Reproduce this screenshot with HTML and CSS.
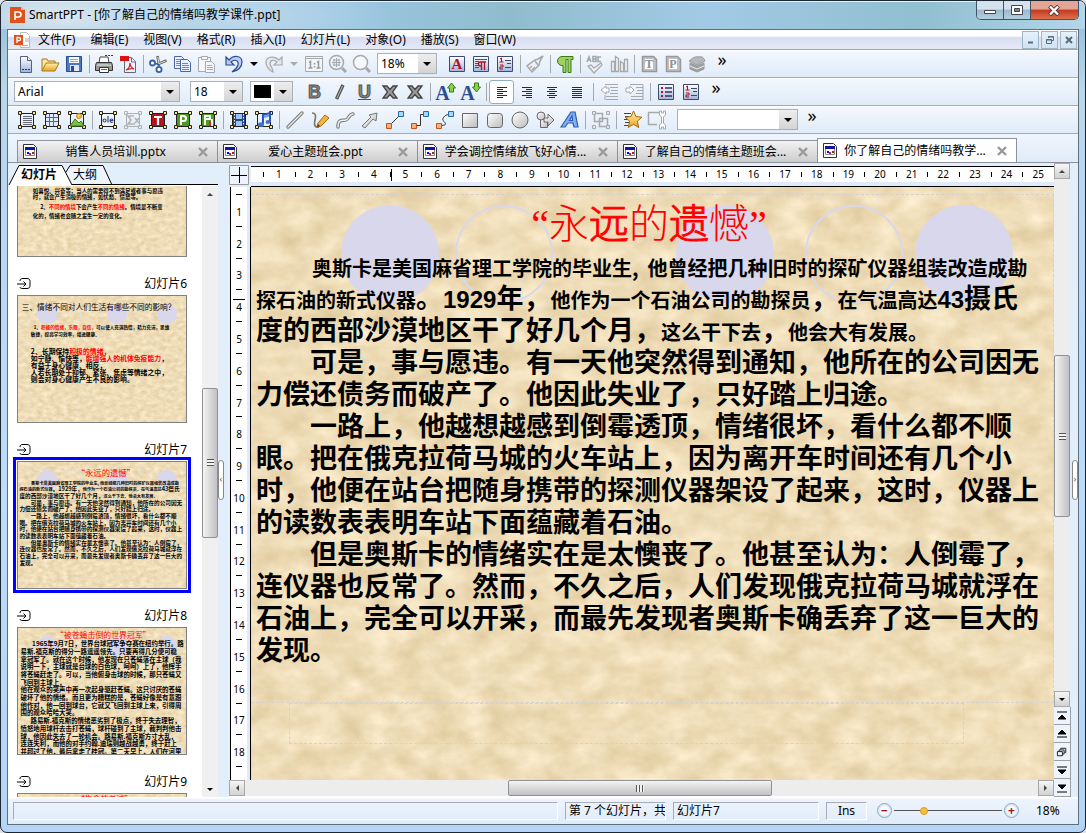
FILE: index.html
```html
<!DOCTYPE html>
<html lang="zh-CN">
<head>
<meta charset="utf-8">
<title>SmartPPT</title>
<link rel="stylesheet" href="styles.css">
</head>
<body>
<svg class="defs" width="0" height="0" aria-hidden="true">
  <defs>
    <filter id="grain" x="0" y="0" width="100%" height="100%" color-interpolation-filters="sRGB">
      <feTurbulence type="fractalNoise" baseFrequency="0.034 0.05" numOctaves="6" seed="8"/>
      <feColorMatrix values="0.13 0.05 0 0 0.845  0.17 0.05 0 0 0.755  0.24 0.06 0 0 0.57  0 0 0 0 1"/>
    </filter>
    <linearGradient id="gBlue" x2="0" y2="1"><stop offset="0" stop-color="#fff"/><stop offset="1" stop-color="#9fb4dc"/></linearGradient>
    <linearGradient id="gGray" x2="1" y2="1"><stop offset="0" stop-color="#fff"/><stop offset="1" stop-color="#bbb"/></linearGradient>
    <linearGradient id="gGold" x2="0" y2="1"><stop offset="0" stop-color="#fff3a8"/><stop offset="1" stop-color="#e9a227"/></linearGradient>
    <g id="paper">
      <rect width="803" height="620" fill="#ecdcb8"/>
      <rect width="803" height="620" filter="url(#grain)"/>
      <g fill="#d9d7ec"><circle cx="139" cy="87" r="49"/><circle cx="474" cy="87" r="49"/><circle cx="713" cy="87" r="49"/></g>
      <g fill="none" stroke="#d9d7ec" stroke-width="2"><circle cx="253" cy="87" r="48"/><circle cx="603" cy="87" r="48"/></g>
    </g>
  </defs>
  <symbol id="frame" viewBox="0 0 20 20">
    <path d="M3.500 3v14M16.500 3v14M3 3.500h14M3 16.500h14" stroke="#222" fill="none"/>
    <g fill="#ffe68a" stroke="#222"><path d="M1.500 1.500h3v3h-3zM15.500 1.500h3v3h-3zM1.500 15.500h3v3h-3zM15.500 15.500h3v3h-3z"/></g>
  </symbol>
  <symbol id="new" viewBox="0 0 20 20"><path d="M4.500 2.500h7l4 4v12h-11z" fill="url(#gBlue)" stroke="#50607e"/><path d="M11.500 2.500v4h4" fill="#fff" stroke="#50607e"/><path d="M6 15.500h2m1 0h2m1 0h2" stroke="#335"/></symbol>
  <symbol id="open" viewBox="0 0 20 20"><path d="M2 17V5h5l1 2h7v3" fill="#ffe79a" stroke="#a37a1c"/><path d="M2 17l4-8h13l-4 8z" fill="url(#gGold)" stroke="#a37a1c"/></symbol>
  <symbol id="save" viewBox="0 0 20 20"><path d="M2.500 2.500h15v15h-15z" fill="#4d78c8" stroke="#284b8f"/><path d="M5 3h10v6H5z" fill="#fff"/><path d="M6 11h9v6H6z" fill="#dce6f6"/><path d="M7 12h3v5H7z" fill="#284b8f"/><path d="M6 5.500h8M6 7.500h8" stroke="#9ab"/></symbol>
  <symbol id="print" viewBox="0 0 20 20"><path d="M11 1.500h8" stroke="#336" stroke-dasharray="2 1"/><path d="M5 9l1-6h8l1 6" fill="#fff" stroke="#444"/><path d="M2.500 8.500h15l1 3v5h-17v-5z" fill="#999" stroke="#333"/><path d="M3 11h14" stroke="#eee"/><path d="M5.500 13.500h9v5h-9z" fill="#fff" stroke="#333"/><path d="M7 15.500h6" stroke="#36a"/><path d="M14 10h2" stroke="#5c2"/></symbol>
  <symbol id="pdf" viewBox="0 0 20 20"><path d="M6.500 3.500h7l4 4v11h-11z" fill="#eef" stroke="#667"/><path d="M2 2h9v5H2z" fill="#d11"/><path d="M13.500 4v4h4" fill="#fff" stroke="#667"/><path d="M8 16c3-1 4-5 4-7 0 3 2 5 4 6-3-1-5 0-8 1z" fill="none" stroke="#c22" stroke-width="1.300"/></symbol>
  <symbol id="cut" viewBox="0 0 20 20"><path d="M9.500 2l1.500 9M18.500 6.500L9 10.500" stroke="#666" stroke-width="2.600"/><path d="M9.800 3l1.200 7M17.500 7L10 10" fill="none" stroke="#ddd"/><circle cx="4.500" cy="9" r="2.500" fill="#fff" stroke="#3a5fa8" stroke-width="1.800"/><circle cx="11" cy="15.500" r="2.600" fill="#fff" stroke="#3a5fa8" stroke-width="1.800"/><path d="M7 9.500l4 1v2" fill="none" stroke="#3a5fa8" stroke-width="1.600"/></symbol>
  <symbol id="copy" viewBox="0 0 20 20"><g fill="#eaf0fc" stroke="#4a66a4"><path d="M2.500 2.500h7l2 2v10h-9z"/><path d="M8.500 5.500h7l3 3v9h-10z"/></g><path d="M4 5.500h5M4 7.500h4M4 9.500h4M4 11.500h4M10 9.500h6M10 11.500h7M10 13.500h7M10 15.500h7" stroke="#6b86c2"/></symbol>
  <symbol id="paste" viewBox="0 0 20 20"><g fill="#f4f6fa" stroke="#a5a8ad"><path d="M2.500 3.500h12v14h-12z"/><path d="M5.500 2.500h6v3h-6z"/><path d="M9.500 7.500h6l3 3v8h-9z"/></g><path d="M11 11.500h5M11 13.500h6M11 15.500h6" stroke="#a5a8ad"/></symbol>
  <symbol id="undo" viewBox="0 0 20 20"><path d="M2 3v8h8L7 8c3-3 8-2 7 3-1 3-3 5-6 7 6-1 10-5 10-10 0-6-8-8-13-2z" fill="#b8cdf2" stroke="#2c4c94" stroke-width="1.200"/></symbol>
  <symbol id="redo" viewBox="0 0 20 20"><path d="M18 3v8h-8l3-3c-3-3-7-2-7 2 1 3 3 5 3 8-4-2-7-6-7-10 0-5 8-7 13-2z" fill="#e6e8ec" stroke="#a5a8ad" stroke-width="1.200"/></symbol>
  <symbol id="one" viewBox="0 0 20 20"><path d="M1.500 2.500h17v15h-17zM1.500 4.500h17" fill="#f2f4f8" stroke="#a5a8ad"/><path d="M5 8.500l1.500-1V14M4.500 14h4M13 8.500l1.500-1V14M12.500 14h4M10.500 9v1.500m0 1.500v1.500" fill="none" stroke="#999" stroke-width="1.500"/></symbol>
  <symbol id="zoomw" viewBox="0 0 20 20"><circle cx="8.500" cy="8.500" r="7" fill="none" stroke="#a5a8ad" stroke-width="1.500"/><path d="M8.500 4v9M4 8.500h9M6 5v7M11 5v7M5 6h7M5 11h7" stroke="#a5a8ad"/><path d="M14 14l4 4" stroke="#a5a8ad" stroke-width="3"/></symbol>
  <symbol id="zoomp" viewBox="0 0 20 20"><circle cx="8.500" cy="8.500" r="7" fill="#f5f7fa" stroke="#a5a8ad" stroke-width="1.500"/><path d="M14 14l4 4" stroke="#a5a8ad" stroke-width="3"/></symbol>
  <symbol id="panel" viewBox="0 0 20 20"><path d="M2.500 2.500h15v15h-15z" fill="url(#gBlue)" stroke="#3c4a6c"/></symbol>
  <symbol id="pilcrow" viewBox="0 0 20 20"><use href="#panel"/><path d="M4 5.500h12M4 7.500h4M4 9.500h3M4 11.500h3M4 13.500h4" stroke="#456"/><path d="M10.500 16V8.500M13.500 16V8.500M15 8H9.500a2 2 0 000 4h1" fill="none" stroke="#b01020" stroke-width="1.300"/></symbol>
  <symbol id="num" viewBox="0 0 20 20"><use href="#panel"/><path d="M5 5l1.500-1v4M4.500 8h4M5 11h3v2H5v2h3" fill="none" stroke="#b01020"/><path d="M10 6.500h6M10 13.500h6M12 9.500h4" stroke="#446"/></symbol>
  <symbol id="bul" viewBox="0 0 20 20"><use href="#panel"/><path d="M5 5h2v2H5zM5 9h2v2H5zM5 13h2v2H5z" fill="#b01020"/><path d="M9 6h7M9 10h7M9 14h7" stroke="#335" stroke-width="1.300"/></symbol>
  <symbol id="brush" viewBox="0 0 20 20"><path d="M18 2l-5 3-3 1-8 6 5 6 7-7 1-4z" fill="#f1f2f5" stroke="#a5a8ad" stroke-width="1.500"/><path d="M10 7l3 4M5 14l2-2M7 16l3-3" stroke="#a5a8ad" stroke-width="1.500"/></symbol>
  <symbol id="para" viewBox="0 0 20 20"><path d="M18 2.500H7a4.500 4.500 0 000 9h1v7h3v-13h2v13h3v-13h2z" fill="#9ad45c" stroke="#3c7a14"/></symbol>
  <symbol id="spell" viewBox="0 0 20 20"><path d="M2 8l2-5 2 5M3 6h3M8 8V2.500h3v5H8m0-2.500h3M16 3h-3v4.500h3" fill="none" stroke="#a5a8ad" stroke-width="1.600"/><path d="M3 12l3-1 3 3 7-5 1 2-8 8z" fill="#eee" stroke="#a5a8ad" stroke-width="1.200"/></symbol>
  <symbol id="books" viewBox="0 0 20 20"><path d="M2.500 17.500v-10h3v10zM6.500 17.500v-15l3 2v13zM11.500 17.500v-10l3 2v8zM15.500 17.500v-12h3v12z" fill="#f1f2f5" stroke="#a5a8ad" stroke-width="1.300"/></symbol>
  <symbol id="dict" viewBox="0 0 20 20"><path d="M3.500 2.500h11l3 3v12h-14z" fill="#bfc1c5" stroke="#999" stroke-width="1.500"/><path d="M6 5h8v10H6z" fill="#fff"/></symbol>
  <symbol id="hat" viewBox="0 0 20 20"><path d="M2 7c3-3 7-5 10-4 3-1 5 1 6 4l-8 4z" fill="#b6b8bc" stroke="#999"/><path d="M3 9l7 3 7-3v6l-7 3-7-3z" fill="#9c9ea2" stroke="#999"/><path d="M3 12l7 3 7-3" fill="none" stroke="#eee"/></symbol>
  <symbol id="biu" viewBox="0 0 20 20"><path d="M6.500 17L13 3" stroke="#555" stroke-width="3.500"/><path d="M7 16L12.500 4" stroke="#bbb"/></symbol>
  <symbol id="cross" viewBox="0 0 20 20"><path d="M3 4h4l3 3.500L13 4h4l-4.500 6 4.500 6h-4l-3-3.500L7 16H3l4.500-6z" fill="#999" stroke="#444" stroke-width="1.300"/></symbol>
  <symbol id="up" viewBox="0 0 20 20"><path d="M15.500 1l4 5h-2v4h-4V6h-2z" fill="#8cd04a" stroke="#3a7a12"/></symbol>
  <symbol id="down" viewBox="0 0 20 20"><path d="M15.500 10l4-5h-2V1h-4v4h-2z" fill="#8cd04a" stroke="#3a7a12"/></symbol>
  <symbol id="al" viewBox="0 0 20 20"><path d="M5 5.500h10M5 7.500h6M5 9.500h10M5 11.500h6M5 13.500h10M5 15.500h6" stroke="#222b4a"/></symbol>
  <symbol id="ar" viewBox="0 0 20 20"><path d="M5 5.500h10M9 7.500h6M5 9.500h10M9 11.500h6M5 13.500h10M9 15.500h6" stroke="#222b4a"/></symbol>
  <symbol id="ac" viewBox="0 0 20 20"><path d="M5 5.500h10M7 7.500h6M5 9.500h10M7 11.500h6M5 13.500h10M7 15.500h6" stroke="#222b4a"/></symbol>
  <symbol id="aj" viewBox="0 0 20 20"><path d="M5 5.500h10M5 7.500h10M5 9.500h10M5 11.500h10M5 13.500h10M5 15.500h10" stroke="#222b4a"/></symbol>
  <symbol id="outd" viewBox="0 0 20 20"><path d="M5 2.500h13M10 5.500h8M11 8.500h7M10 11.500h8M6 14.500h12M6 17.500h12M5 13v5" stroke="#a5a8ad"/><path d="M1 8l5-4v2h3v4H6v2z" fill="#fff" stroke="#a5a8ad"/></symbol>
  <symbol id="ind" viewBox="0 0 20 20"><path d="M5 2.500h13M11 5.500h7M12 8.500h6M11 11.500h7M6 14.500h12M6 17.500h12M18 3v15" stroke="#a5a8ad"/><path d="M9 8L5 4v2H1v4h4v2z" fill="#fff" stroke="#a5a8ad"/></symbol>
  <symbol id="f-text" viewBox="0 0 20 20"><use href="#frame"/><path d="M6 6.500h9M6 8.500h9M6 10.500h9M6 12.500h9M6 14.500h9" stroke="#667"/></symbol>
  <symbol id="f-table" viewBox="0 0 20 20"><path d="M4 4h12v12H4z" fill="#dfeafc"/><path d="M7.500 4v12M11.500 4v12M4 7.500h12M4 11.500h12" stroke="#4868a8"/><use href="#frame"/></symbol>
  <symbol id="f-pic" viewBox="0 0 20 20"><use href="#frame"/><path d="M3 16l5-7 4 4 2-2 3 5z" fill="#7cc043" stroke="#3c7a1c"/><circle cx="12" cy="6" r="2.500" fill="#f7c948" stroke="#c98512"/></symbol>
  <symbol id="f-ole" viewBox="0 0 20 20"><path d="M4 4h12v12H4z" fill="#f2f5fb"/><use href="#frame"/><g fill="none" stroke="#334a84" stroke-width="1.200"><circle cx="6.500" cy="10.500" r="1.500"/><path d="M10 6v6.500M12 10.500h3c0-2-3-2-3 0s2 2 3 1.500"/></g></symbol>
  <symbol id="f-sum" viewBox="0 0 20 20"><g fill="none" stroke="#b0b2b6"><path d="M3.500 3.500h13v13h-13z"/><path d="M1.500 1.500h3v3h-3zM15.500 1.500h3v3h-3zM1.500 15.500h3v3h-3zM15.500 15.500h3v3h-3z"/><path d="M11 6H5l3 4-3 4h7M12 8l4 5M16 8l-4 5" stroke-width="1.600"/></g></symbol>
  <symbol id="f-t" viewBox="0 0 20 20"><path d="M4 4h12v12H4z" fill="#b3141c"/><path d="M6 7h8M10 7v8" stroke="#fff" stroke-width="2.200"/><use href="#frame"/></symbol>
  <symbol id="f-p" viewBox="0 0 20 20"><path d="M4 4h12v12H4z" fill="#4e9a1c"/><path d="M8 15V6h2.500a2.300 2.300 0 010 5H8" fill="none" stroke="#fff" stroke-width="2"/><use href="#frame"/></symbol>
  <symbol id="f-f" viewBox="0 0 20 20"><path d="M4 4h12v12H4z" fill="#4e9a1c"/><path d="M7 15V6h5v3H8" fill="none" stroke="#fff" stroke-width="1.800"/><path d="M11 11h2v5h-2z" fill="#d22"/><path d="M13 9h2v7h-2z" fill="#fff"/><use href="#frame"/></symbol>
  <symbol id="f-film" viewBox="0 0 20 20"><path d="M4 3h12v14H4z" fill="#27427e"/><path d="M7 4h6v5H7zM7 11h6v5H7z" fill="#9cc4f4"/><path d="M5.500 4v12M14.500 4v12" stroke="#fff" stroke-dasharray="1.500 1.500"/><use href="#frame"/></symbol>
  <symbol id="f-note" viewBox="0 0 20 20"><path d="M4 4h12v12H4z" fill="#e9f0fc"/><use href="#frame"/><path d="M9 14V5l7-2v9" fill="none" stroke="#2d56a8" stroke-width="2"/><path d="M10 7l5-1.500" stroke="#6f9be0" stroke-width="2"/><ellipse cx="7" cy="14.500" rx="3" ry="2.300" fill="#3f74d0"/><ellipse cx="14" cy="12" rx="2.500" ry="2" fill="#3f74d0"/></symbol>
  <symbol id="line" viewBox="0 0 20 20"><path d="M3 17L17 3" stroke="#777" stroke-width="3.400" stroke-linecap="round"/><path d="M3 17L17 3" stroke="#eee" stroke-width="1.400" stroke-linecap="round"/></symbol>
  <symbol id="pencil" viewBox="0 0 20 20"><path d="M2 3c4 0 4 3 3 7s-1 8 4 7" fill="none" stroke="#776" stroke-width="1.600"/><path d="M15 5l4 3-8 8-4 1 1-4z" fill="#f2b63c" stroke="#a6691a"/><path d="M7 17l1-3 2 2z" fill="#533"/></symbol>
  <symbol id="curve" viewBox="0 0 20 20"><g fill="none" stroke-linecap="round"><path d="M3 17c0-9 5-6 8-7s3-6 7-6" stroke="#777" stroke-width="3.400"/><path d="M3 17c0-9 5-6 8-7s3-6 7-6" stroke="#eee" stroke-width="1.400"/></g></symbol>
  <symbol id="arrow" viewBox="0 0 20 20"><path d="M2 16l9-9-2-2 8-2-1 8-3-2-8 9z" fill="url(#gGray)" stroke="#777"/></symbol>
  <symbol id="ends" viewBox="0 0 20 20"><path d="M1.500 13.500h5v5h-5z" fill="#f7b27a" stroke="#c4541a"/><path d="M13.500 1.500h5v5h-5z" fill="#a8d8f8" stroke="#246ca8"/></symbol>
  <symbol id="c1" viewBox="0 0 20 20"><path d="M6 14l8-8" stroke="#333"/><use href="#ends"/></symbol>
  <symbol id="c2" viewBox="0 0 20 20"><path d="M6 15.500h4.500v-11H14" fill="none" stroke="#333"/><use href="#ends"/></symbol>
  <symbol id="c3" viewBox="0 0 20 20"><path d="M6 15.500c8 0 3-4 2-5s1-6 6-6" fill="none" stroke="#333"/><use href="#ends"/></symbol>
  <symbol id="rect" viewBox="0 0 20 20"><path d="M2.500 3.500h15v14h-15z" fill="url(#gGray)" stroke="#666"/></symbol>
  <symbol id="rrect" viewBox="0 0 20 20"><rect x="2.500" y="3.500" width="15" height="14" rx="3" fill="url(#gGray)" stroke="#666"/></symbol>
  <symbol id="oval" viewBox="0 0 20 20"><circle cx="10" cy="10" r="8" fill="url(#gGray)" stroke="#666"/></symbol>
  <symbol id="shapes" viewBox="0 0 20 20"><g fill="url(#gGray)" stroke="#666"><path d="M5.500 8.500h7v9h-7z"/><circle cx="6" cy="6" r="4"/><path d="M9 8h4V4l6 6-6 6v-4H9z"/></g></symbol>
  <symbol id="art" viewBox="0 0 20 20"><path d="M1 17L11 2h4l3 15h-4l-1-4H8l-3 4zM9.500 10.500h3L12 6z" fill="#7fb0f0" fill-rule="evenodd" stroke="#2c5cb0" stroke-width="1.200"/></symbol>
  <symbol id="group" viewBox="0 0 20 20"><g fill="#e4e6ea" stroke="#a5a8ad"><path d="M3.500 3.500h8v8h-8zM8.500 8.500h8v8h-8z" fill="none" stroke-width="1.500"/><path d="M1.500 1.500h3v3h-3zM15.500 1.500h3v3h-3zM1.500 15.500h3v3h-3zM15.500 15.500h3v3h-3z"/></g></symbol>
  <symbol id="star" viewBox="0 0 20 20"><path d="M2 3.500h7M3 6.500h4M2 9.500h5M3 12.500h4M2 15.500h4" stroke="#444"/><path d="M11.500 1l2.400 5.500 6 .7-4.500 4 1.300 6.300-5.200-3.200-5.200 3.200 1.300-6.300-4.500-4 6-.7z" fill="url(#gGold)" stroke="#a06c0c"/></symbol>
  <symbol id="wrench" viewBox="0 0 20 20"><path d="M10 14.500H1.500v-12h12" fill="none" stroke="#a5a8ad" stroke-width="1.500"/><path d="M12.500 1v4l2 2v6l-2 2v4h2v-2h2v2h2v-4l-2-2V7l2-2V1h-2v2h-2V1z" fill="#fff" stroke="#a5a8ad"/></symbol>
  <symbol id="doc" viewBox="0 0 14 15"><path d="M.5.500h10l3 3v11H.5z" fill="#fff" stroke="#333"/><path d="M2.500 3.500h9v8h-9z" fill="#fff" stroke="#888"/><path d="M2 3h10v3H2z" fill="#1414a0"/><path d="M4 8h2v2H4z" fill="#00f"/><path d="M6 9h2v2H6z" fill="#c22"/><path d="M9 8h2v2H9z" fill="#a22"/></symbol>
  <symbol id="close" viewBox="0 0 10 10"><path d="M1 1l8 8M9 1L1 9" stroke="#999" stroke-width="2.400"/></symbol>
  <symbol id="trans" viewBox="0 0 14 12"><path d="M3 3c0-2 1-2.500 3-2.500h4c2 0 3 1 3 3v4c0 2-1 3-3 3H6C4 10.500 3 10 3 9M0 6h9M6.500 3.500L9 6 6.500 8.500" fill="none" stroke="#000"/></symbol>
</svg>

<div class="window">
  <header class="titlebar">
    <svg class="logo" viewBox="0 0 15 16"><path d="M0 0h11l4 3v13H0z" fill="#e0521c"/><path d="M11 0v3h4z" fill="#f8c0a0"/><path d="M5 13V5h3.500a2.300 2.300 0 010 5H5" fill="none" stroke="#fff" stroke-width="1.600"/></svg>
    <h1>SmartPPT - [你了解自己的情绪吗教学课件.ppt]</h1>
    <div class="winbtns">
      <button aria-label="最小化"><svg viewBox="0 0 13 11"><path d="M.5 5.500h11v3H.5z" fill="#fff" stroke="#445"/></svg></button>
      <button aria-label="最大化"><svg viewBox="0 0 13 11"><path d="M.5.500h11v9H.5z" fill="#fff" stroke="#445"/><path d="M3.500 3.500h5v3h-5z" fill="#789" stroke="#445"/></svg></button>
      <button class="x" aria-label="关闭"><svg viewBox="0 0 13 11"><path d="M1.500 1l9 9M10.500 1l-9 9" stroke="#533" stroke-width="4"/><path d="M2 1.500l8 8M10 1.500l-8 8" stroke="#fff" stroke-width="2.400"/></svg></button>
    </div>
  </header>

  <div class="client">
    <nav class="menubar">
      <svg class="applogo" viewBox="0 0 16 16"><path d="M6.500.500h6l3 3v12h-9z" fill="#fff" stroke="#bbb"/><path d="M11 7h4M11 9h4M8 13.500h6" stroke="#aab"/><path d="M0 3h9v10H0z" fill="#e0521c"/><path d="M3 11V5.500h2a1.500 1.500 0 010 3.200H3" fill="none" stroke="#fff" stroke-width="1.300"/></svg>
      <button>文件(F)</button><button>编辑(E)</button><button>视图(V)</button><button>格式(R)</button><button>插入(I)</button><button>幻灯片(L)</button><button>对象(O)</button><button>播放(S)</button><button>窗口(W)</button>
      <div class="mdi">
        <button aria-label="最小化文档"><svg viewBox="0 0 10 10"><path d="M2 7.500h5" stroke="#5a6a7a" stroke-width="2"/></svg></button>
        <button aria-label="还原文档"><svg viewBox="0 0 10 10"><path d="M3.500 3V1.500h5v4H7M3 2h6M1.500 4.500h5v4h-5zM1 5h6" fill="none" stroke="#5a6a7a"/></svg></button>
        <button aria-label="关闭文档"><svg viewBox="0 0 10 10"><path d="M2 2l6 6M8 2L2 8" stroke="#5a6a7a" stroke-width="2"/></svg></button>
      </div>
    </nav>

    <div class="toolbar t1">
      <button aria-label="新建"><svg><use href="#new"/></svg></button><button aria-label="打开"><svg><use href="#open"/></svg></button><button aria-label="保存"><svg><use href="#save"/></svg></button><i class="sep"></i>
      <button aria-label="打印"><svg><use href="#print"/></svg></button><button aria-label="导出PDF"><svg><use href="#pdf"/></svg></button><i class="sep"></i>
      <button aria-label="剪切"><svg><use href="#cut"/></svg></button><button aria-label="复制"><svg><use href="#copy"/></svg></button><button aria-label="粘贴"><svg><use href="#paste"/></svg></button>
      <button class="lead" aria-label="撤销"><svg><use href="#undo"/></svg></button><button class="drop" aria-label="撤销列表"><i class="tri"></i></button>
      <button aria-label="重做"><svg><use href="#redo"/></svg></button><button class="drop off" aria-label="重做列表"><i class="tri"></i></button>
      <button aria-label="实际大小"><svg><use href="#one"/></svg></button><button aria-label="适合窗口"><svg><use href="#zoomw"/></svg></button><button aria-label="缩放"><svg><use href="#zoomp"/></svg></button>
      <span class="combo zoom"><select aria-label="显示比例"><option>18%</option></select><i class="tri"></i></span>
      <button class="glyph" aria-label="字符"><svg><use href="#panel"/></svg><b class="red">A</b></button><button aria-label="段落"><svg><use href="#pilcrow"/></svg></button><button aria-label="编号列表"><svg><use href="#num"/></svg></button><i class="sep"></i>
      <button aria-label="格式刷"><svg><use href="#brush"/></svg></button><i class="sep"></i>
      <button aria-label="格式标记"><svg><use href="#para"/></svg></button><i class="sep"></i>
      <button aria-label="拼写"><svg><use href="#spell"/></svg></button><button aria-label="词库"><svg><use href="#books"/></svg></button><i class="sep"></i>
      <button class="glyph" aria-label="文字处理"><svg><use href="#dict"/></svg><b class="gray">T</b></button><button class="glyph" aria-label="表格计算"><svg><use href="#dict"/></svg><b class="gray">P</b></button><button aria-label="学习"><svg><use href="#hat"/></svg></button>
      <button class="more" aria-label="更多常用工具">»</button>
    </div>

    <div class="toolbar t2">
      <span class="combo font"><select aria-label="字体"><option>Arial</option></select><i class="tri"></i></span>
      <span class="combo size"><select aria-label="字号"><option>18</option></select><i class="tri"></i></span>
      <button class="combo color" aria-label="字体颜色"><span class="swatch"></span><i class="tri"></i></button>
      <button class="style lead2" aria-label="加粗"><b>B</b></button><button aria-label="倾斜"><svg><use href="#biu"/></svg></button><button class="style" aria-label="下划线"><b><u>U</u></b></button><button aria-label="阴影"><svg><use href="#cross"/></svg></button><button aria-label="轮廓"><svg><use href="#cross"/></svg></button><i class="sep"></i>
      <button class="grow" aria-label="增大字号"><b>A</b><svg><use href="#up"/></svg></button><button class="grow" aria-label="减小字号"><b>A</b><svg><use href="#down"/></svg></button><i class="sep"></i>
      <button class="on" aria-label="左对齐"><svg><use href="#al"/></svg></button><button aria-label="右对齐"><svg><use href="#ar"/></svg></button><button aria-label="居中"><svg><use href="#ac"/></svg></button><button aria-label="两端对齐"><svg><use href="#aj"/></svg></button><i class="sep wide"></i>
      <button aria-label="减少缩进"><svg><use href="#outd"/></svg></button><button aria-label="增加缩进"><svg><use href="#ind"/></svg></button><i class="sep"></i>
      <button aria-label="项目符号"><svg><use href="#bul"/></svg></button><button aria-label="编号"><svg><use href="#num"/></svg></button>
      <button class="more" aria-label="更多格式工具">»</button>
    </div>

    <div class="toolbar t3">
      <button aria-label="文本框"><svg><use href="#f-text"/></svg></button><button aria-label="表格"><svg><use href="#f-table"/></svg></button><button aria-label="图片"><svg><use href="#f-pic"/></svg></button><i class="sep"></i>
      <button aria-label="OLE对象"><svg><use href="#f-ole"/></svg></button><button aria-label="公式"><svg><use href="#f-sum"/></svg></button><button aria-label="文档对象"><svg><use href="#f-t"/></svg></button><button aria-label="表格对象"><svg><use href="#f-p"/></svg></button><button aria-label="图表"><svg><use href="#f-f"/></svg></button><i class="sep"></i>
      <button aria-label="影片"><svg><use href="#f-film"/></svg></button><button aria-label="声音"><svg><use href="#f-note"/></svg></button><i class="sep"></i>
      <button aria-label="直线"><svg><use href="#line"/></svg></button><button aria-label="自由绘制"><svg><use href="#pencil"/></svg></button><button aria-label="曲线"><svg><use href="#curve"/></svg></button><button aria-label="箭头"><svg><use href="#arrow"/></svg></button><button aria-label="直线连接符"><svg><use href="#c1"/></svg></button><button aria-label="肘形连接符"><svg><use href="#c2"/></svg></button><button aria-label="曲线连接符"><svg><use href="#c3"/></svg></button><button aria-label="矩形"><svg><use href="#rect"/></svg></button><button aria-label="圆角矩形"><svg><use href="#rrect"/></svg></button><button aria-label="椭圆"><svg><use href="#oval"/></svg></button><button aria-label="自选图形"><svg><use href="#shapes"/></svg></button><button aria-label="艺术字"><svg><use href="#art"/></svg></button><i class="sep"></i>
      <button aria-label="组合"><svg><use href="#group"/></svg></button><i class="sep"></i>
      <button aria-label="动画"><svg><use href="#star"/></svg></button><button aria-label="对象属性"><svg><use href="#wrench"/></svg></button>
      <span class="combo obj"><select aria-label="对象"><option></option></select><i class="tri"></i></span>
      <button class="more" aria-label="更多对象工具">»</button>
    </div>

    <div class="doctabs">
      <div class="doctab"><svg class="doc"><use href="#doc"/></svg><button class="name">销售人员培训.pptx</button><button class="cl" aria-label="关闭"><svg><use href="#close"/></svg></button></div>
      <div class="doctab"><svg class="doc"><use href="#doc"/></svg><button class="name">爱心主题班会.ppt</button><button class="cl" aria-label="关闭"><svg><use href="#close"/></svg></button></div>
      <div class="doctab"><svg class="doc"><use href="#doc"/></svg><button class="name">学会调控情绪放飞好心情...</button><button class="cl" aria-label="关闭"><svg><use href="#close"/></svg></button></div>
      <div class="doctab"><svg class="doc"><use href="#doc"/></svg><button class="name">了解自己的情绪主题班会...</button><button class="cl" aria-label="关闭"><svg><use href="#close"/></svg></button></div>
      <div class="doctab active"><svg class="doc"><use href="#doc"/></svg><button class="name">你了解自己的情绪吗教学...</button><button class="cl" aria-label="关闭"><svg><use href="#close"/></svg></button></div>
    </div>

    <div class="workspace">
      <aside class="side">
        <div class="sidetabs">
          <svg viewBox="0 0 210 23" width="210" height="23"><path d="M1 22L11 3h43l10 19H210V23H1z" fill="#fff"/><path d="M58 9l4-7h33l10 20H64z" fill="#eef4fc"/><path d="M1 22L11 2.500h43l10 19.500M58 9l4-6.500h33l9 19.500M64 21.500h146" fill="none" stroke="#000"/></svg>
          <button class="cur">幻灯片</button><button>大纲</button>
        </div>
        <div class="sidebody">
          <div class="thumbs">
            <figure><svg class="thumb cut" viewBox="0 0 803 605" preserveAspectRatio="xMidYMax slice"><use href="#paper"/>
              <g class="tt" font-size="26"><text x="71" y="302">如喜悦、兴奋等；当人的需要得不到满足或者事与愿违</text><text x="71" y="332">时，就会产生消极的情绪，如忧愁、愤怒等。</text><text x="106" y="379">2、<tspan class="r">不同的情境</tspan>下会产生<tspan class="r">不同的情绪</tspan>。情境是不断变</text><text x="71" y="421">化的，情绪也会随之发生一定的变化。</text></g></svg></figure>
            <figure><figcaption><svg><use href="#trans"/></svg><span>幻灯片6</span></figcaption>
              <svg class="thumb" viewBox="0 0 803 605"><use href="#paper"/><g class="tt"><text x="16" y="66" font-size="37" class="n">三、情绪不同对人们生活有哪些不同的影响？</text><g font-size="22"><text x="74" y="158">1、<tspan class="r">积极的情绪，乐观，自信，</tspan>可以使人充满热情，精力充沛，思维</text><text x="60" y="192">敏捷，提高学习效率，增进健康。</text></g><g font-size="33"><text x="60" y="278">2、长期保持<tspan class="r">积极的情绪，</tspan></text><text x="60" y="312">如宁静、愉快等，<tspan class="r">能增强人的机体免疫能力</tspan>，</text><text x="60" y="346">有益于身心健康、相反，</text><text x="60" y="380">人若长期处于抑郁、紧张、焦虑等情绪之中，</text><text x="60" y="414">则会对身心健康产生不良的影响。</text></g></g></svg></figure>
            <figure class="sel"><figcaption><svg><use href="#trans"/></svg><span>幻灯片7</span></figcaption>
              <svg class="thumb" viewBox="0 0 803 605"><use href="#paper"/><g class="tt" font-size="27"><text x="280" y="68" font-size="40" class="n r">“永远的遗憾”</text>
              <text x="61" y="109" font-size="20">奥斯卡是美国麻省理工学院的毕业生, 他曾经把几种旧时的探矿仪器组装改造成勘</text>
              <text x="5" y="141"><tspan font-size="20">探石油的新式仪器</tspan>。1929年，<tspan font-size="20">他作为一个石油公司的勘探员，在气温高达</tspan>43摄氏</text>
              <text x="5" y="173">度的西部沙漠地区干了好几个月，<tspan font-size="20">这么干下去，他会大有发展。</tspan></text>
              <text x="59" y="205">可是，事与愿违。有一天他突然得到通知，他所在的公司因无</text>
              <text x="5" y="237">力偿还债务而破产了。他因此失业了，只好踏上归途。</text>
              <text x="59" y="269">一路上，他越想越感到倒霉透顶，情绪很坏，看什么都不顺</text>
              <text x="5" y="301">眼。把在俄克拉荷马城的火车站上，因为离开车时间还有几个小</text>
              <text x="5" y="333">时，他便在站台把随身携带的探测仪器架设了起来，这时，仪器上</text>
              <text x="5" y="365">的读数表表明车站下面蕴藏着石油。</text>
              <text x="59" y="397">但是奥斯卡的情绪实在是太懊丧了。他甚至认为：人倒霉了，</text>
              <text x="5" y="429">连仪器也反常了。然而，不久之后，人们发现俄克拉荷马城就浮在</text>
              <text x="5" y="461">石油上，完全可以开采，而最先发现者奥斯卡确丢弃了这一巨大的</text>
              <text x="5" y="493">发现。</text></g></svg></figure>
            <figure><figcaption><svg><use href="#trans"/></svg><span>幻灯片8</span></figcaption>
              <svg class="thumb" viewBox="0 0 803 605"><use href="#paper"/><g class="tt" font-size="31"><text x="180" y="46" font-size="38" class="n r">“被苍蝇击倒的世界冠军”</text>
              <text x="66" y="87">1965年9月7日，世界台球冠军争夺赛在纽约举行。路</text><text x="10" y="124">易斯.福克斯的得分一路遥遥领先。只要再得几分便可稳</text><text x="10" y="161">拿冠军了。就在这个时候，他发现在只苍蝇落在主球（我</text><text x="10" y="198">说明一下，主球就是台球的白色球，呵呵）上了，他挥手</text><text x="10" y="235">将苍蝇赶走了。可以，当他俯身击球的时候，那只苍蝇又</text><text x="10" y="272">飞回到主球上，</text><text x="10" y="309">他在观众的笑声中再一次起身驱赶苍蝇。这只讨厌的苍蝇</text><text x="10" y="346">破坏了他的情绪。而且更为糟糕的是，苍蝇好像是有意跟</text><text x="10" y="383">他作对，他一回到球台，它就又飞回到主球上来，引得周</text><text x="10" y="420">围的观众哈哈大笑。</text><text x="58" y="457">路易斯.福克斯的情绪恶劣到了极点，终于失去理智，</text><text x="10" y="494">愤怒地用球杆去击打苍蝇，球杆碰到了主球，裁判判他击</text><text x="10" y="531">球，他因此失去了一轮机会。路易斯.福克斯方寸大乱，</text><text x="10" y="568">连连失利，而他的对手约翰.迪瑞则越战越勇，终于赶上</text><text x="10" y="605">并超过了他，最后拿走了桂冠。第二天早上，人们在河里</text></g></svg></figure>
            <figure><figcaption><svg><use href="#trans"/></svg><span>幻灯片9</span></figcaption>
              <svg class="thumb" viewBox="0 0 803 605"><use href="#paper"/><g class="tt"><text x="280" y="38" font-size="38" class="n r">“生命的考试”</text></g></svg></figure>
          </div>
          <div class="vscroll flat"><button class="sb" aria-label="向上"><i class="tri u"></i></button><div class="gap a"></div><div class="knob"><i></i></div><div class="gap b"></div><button class="sb" aria-label="向下"><i class="tri"></i></button></div>
        </div>
      </aside>
      <div class="split"><i class="handle">‹</i></div>

      <main class="editor">
        <div class="corner"><svg viewBox="0 0 20 20"><path d="M.5.500h19v19H.5z" fill="#eef4fc" stroke="#999"/><path d="M2 10.500h16M10.500 2v16" stroke="#000"/></svg></div>
        <div class="hruler"><i class="mark"></i><span>1</span><span>2</span><span>3</span><span>4</span><span>5</span><span>6</span><span>7</span><span>8</span><span>9</span><span>10</span><span>11</span><span>12</span><span>13</span><span>14</span><span>15</span><span>16</span><span>17</span><span>18</span><span>19</span><span>20</span><span>21</span><span>22</span><span>23</span><span>24</span><span>25</span></div>
        <div class="vruler"><i class="mark"></i><span>1</span><span>2</span><span>3</span><span>4</span><span>5</span><span>6</span><span>7</span><span>8</span><span>9</span><span>10</span><span>11</span><span>12</span><span>13</span><span>14</span><span>15</span><span>16</span><span>17</span><span>18</span><span class="half"></span></div>
        <div class="vcol">
          <div class="vscroll"><button class="sb" aria-label="向上"><i class="tri u"></i></button><div class="gap a"></div><div class="knob"><i></i></div><div class="gap b"></div><button class="sb" aria-label="向下"><i class="tri"></i></button></div>
          <button class="nav" aria-label="第一张"><svg viewBox="0 0 10 10"><path d="M0 1h10M5 4L1 8h8z" fill="#000" stroke="#000"/></svg></button>
          <button class="nav" aria-label="上一张"><svg viewBox="0 0 10 10"><path d="M5 1L1 5h8zM0 8h10" fill="#000" stroke="#000"/></svg></button>
          <button class="nav" aria-label="选择"><svg viewBox="0 0 12 12"><path d="M.5 5.500h6v5h-6zM2.500 5V3.500h6v5H7M4.500 3V1.500h6v5H9" fill="none" stroke="#000"/></svg></button>
          <button class="nav" aria-label="下一张"><svg viewBox="0 0 10 10"><path d="M5 9L1 5h8zM0 2h10" fill="#000" stroke="#000"/></svg></button>
          <button class="nav" aria-label="最后一张"><svg viewBox="0 0 10 10"><path d="M0 9h10M5 6L1 2h8z" fill="#000" stroke="#000"/></svg></button>
        </div>
        <section class="slide">
          <svg class="bg" viewBox="0 20 803 594" preserveAspectRatio="xMidYMin slice"><use href="#paper"/></svg>
          <div class="canvas">
            <h2><b>“</b>永<em>远</em>的<em>遗</em>憾<b>”</b></h2>
            <div class="text">
              <p class="first"><small>奥斯卡是美国麻省理工学院的毕业生,&nbsp; 他曾经把几种旧时的探矿仪器组装改造成勘</small></p>
              <p><small>探石油的新式仪器</small>。<span class="d">1929</span>年，<small>他作为一个石油公司的勘探员</small>，<small>在气温高达</small><span class="d">43</span>摄氏</p>
              <p>度的西部沙漠地区干了好几个月，<small>这么干下去</small>，<small>他会大有发展。</small></p>
              <p class="in">可是，事与愿违。有一天他突然得到通知，他所在的公司因无<br>力偿还债务而破产了。他因此失业了，只好踏上归途。</p>
              <p class="in">一路上，他越想越感到倒霉透顶，情绪很坏，看什么都不顺<br>眼。把在俄克拉荷马城的火车站上，因为离开车时间还有几个小<br>时，他便在站台把随身携带的探测仪器架设了起来，这时，仪器上<br>的读数表表明车站下面蕴藏着石油。</p>
              <p class="in">但是奥斯卡的情绪实在是太懊丧了。他甚至认为：人倒霉了，<br>连仪器也反常了。然而，不久之后，人们发现俄克拉荷马城就浮在<br>石油上，完全可以开采，而最先发现者奥斯卡确丢弃了这一巨大的<br>发现。</p>
            </div>
          </div>
          <div class="footerbox"></div>
        </section>
        <div class="hscroll"><button class="sb" aria-label="向左"><i class="tri l"></i></button><div class="gap a"></div><div class="knob"><i></i></div><div class="gap b"></div><button class="sb" aria-label="向右"><i class="tri rt"></i></button></div>
      </main>
      <div class="rstrip"><i class="handle">›</i></div>
    </div>

    <footer class="status">
      <div class="cell msg"></div><div class="cell page">第 7 个幻灯片，共</div><div class="cell nm">幻灯片7</div><div class="cell ins">Ins</div>
      <div class="zoomer"><button aria-label="缩小">−</button><input type="range" aria-label="缩放" min="0" max="100" value="26"><button aria-label="放大">+</button></div>
      <span class="pct">18%</span>
    </footer>
  </div>
</div>
</body>
</html>
```
FILE: styles.css
```css
* { box-sizing: border-box; }
body { margin: 0; height: 100vh; overflow: hidden; background: #dfe3e6; font: 12px/16px "Noto Sans", "Noto Sans CJK SC", sans-serif; color: #000; }
button { font: inherit; color: inherit; border: 0; background: none; padding: 0; margin: 0; display: flex; align-items: center; justify-content: center; white-space: nowrap; }
svg { display: block; flex: none; }
i { font-style: normal; }
.defs { position: absolute; }

.window { height: 100vh; display: flex; flex-direction: column; padding: 0 6px 7px; border: 1px solid #1c2530; border-radius: 7px; background: linear-gradient(#9cc5dc 0, #9dc5e0 30px, #b8d8e8 90px, #b9d6f4 200px, #bcdcfc 60%, #b4d4f8); }

/* title bar */
.titlebar { height: 28px; flex: none; display: flex; align-items: flex-start; margin: 0 -6px; padding-left: 9px; border-radius: 6px 6px 0 0; background: radial-gradient(ellipse 130px 40px at 60px 14px, #e8f0f6cc, #fff0), radial-gradient(ellipse 160px 40px at 230px 16px, #cfe2f0aa, #fff0), linear-gradient(90deg, #a9c9dd, #9cc8e4 30%, #8fbccd 47%, #a2cae6 65%, #90bfd0 85%, #b3d6ea); box-shadow: inset 0 1px #e6f3fa; }
.logo { width: 15px; height: 16px; margin-top: 6px; }
.titlebar h1 { margin: 6px 0 0 4px; flex: 1; font: inherit; }
.winbtns { display: flex; margin-right: 6px; border: 1px solid #3f5468; border-top: 0; border-radius: 0 0 5px 5px; overflow: hidden; }
.winbtns button { width: 27px; height: 18px; border-right: 1px solid #3f5468; background: linear-gradient(#d3e2ec 45%, #9db8ca 50%, #b4cfdf); }
.winbtns .x { width: 47px; border: 0; background: linear-gradient(#e5a595 45%, #c23b22 50%, #e0714c); }
.winbtns svg { width: 13px; height: 11px; }

.client { flex: 1; min-height: 0; display: flex; flex-direction: column; border: 1px solid #5f6f7c; background: #e3eefb; }
.menubar { height: 20px; flex: none; display: flex; align-items: center; gap: 15px; padding-left: 6px; border-bottom: 1px solid #a0a4ac; background: linear-gradient(#fff 30%, #d8def0 40%, #e4eaf8); }
.applogo { width: 16px; height: 16px; margin-right: -7px; }
.mdi { display: flex; gap: 2px; margin: 0 1px 0 auto; }
.mdi button { width: 17px; height: 18px; border: 1px solid #9fb4c4; background: linear-gradient(#e6f1fa, #cfe3f3); }
.mdi svg { width: 10px; height: 10px; }

/* toolbars */
.toolbar { height: 28px; flex: none; display: flex; align-items: center; padding-left: 6px; border-bottom: 1px solid #a4a9b2; background: linear-gradient(#f4f8fe, #e0ebf9); box-shadow: inset 0 1px #fff; }
.toolbar button { width: 25px; height: 24px; flex: none; position: relative; }
.toolbar svg { width: 20px; height: 20px; }
.toolbar .sep { width: 6px; flex: none; height: 18px; background: linear-gradient(#a4a8b0, #a4a8b0) center / 1px 100% no-repeat; }
.toolbar .sep.wide { width: 8px; }
.t1 button { width: 24px; }
.t1 .lead { margin-left: 4px; }
.toolbar .drop { width: 16px; }
.drop.off .tri { border-top-color: #aaa; }
.tri { width: 0; height: 0; flex: none; border: 4px solid transparent; border-bottom: 0; border-top-color: #000; }
.tri.u { border: 4px solid transparent; border-top: 0; border-bottom-color: #444; }
.tri.l { border: 4px solid transparent; border-left: 0; border-right-color: #444; }
.tri.rt { border: 4px solid transparent; border-right: 0; border-left-color: #444; }
.combo, .toolbar .combo { height: 21px; display: flex; align-items: center; border: 1px solid #aab0b8; flex: none; background: linear-gradient(#eee, #d4d4d4); padding-right: 5px; justify-content: flex-start; }
.combo select { flex: 1; min-width: 0; align-self: stretch; appearance: none; border: 0; border-radius: 0; margin-right: 5px; padding: 0 3px; background: #fff; font: inherit; color: #000; }
.zoom { width: 60px; margin: 0 8px 0 3px; }
.font { width: 166px; }
.size { width: 53px; margin-left: 10px; }
.toolbar .color { width: 43px; margin-left: 7px; }
.swatch { flex: 1; align-self: stretch; margin-right: 5px; background: #000; border: 3px solid #fff; }
.obj { width: 121px; margin-left: 8px; }
.toolbar .lead2 { margin-left: 9px; }
.toolbar .more { font-size: 18px; line-height: 16px; width: 20px; padding-bottom: 10px; }
.t1 .more, .t2 .more { margin-left: 3px; }
.obj + .more { margin-left: 4px; }
.glyph b { position: absolute; inset: 0; font: bold 15px/25px "Liberation Serif", serif; }
.glyph .red { color: #b80f1c; }
.glyph .gray { color: #8c8e92; font-size: 12px; }
.style b { font: bold 18px/20px "Liberation Sans", sans-serif; color: #888; -webkit-text-stroke: 1px #555; }
.grow b { position: absolute; inset: 0 6px 0 0; font: bold 20px/26px "Liberation Serif", serif; color: #2c4c94; }
.toolbar .on { background: #fff; border: 1px solid #8fb0c4; border-radius: 3px; }

/* document tabs */
.doctabs { height: 29px; flex: none; display: flex; align-items: flex-end; padding-left: 9px; border-bottom: 1px solid #8c929c; background: linear-gradient(#eff5fd, #e0ebf9); }
.doctab { flex: 0 1 200px; min-width: 0; height: 22px; display: flex; align-items: center; padding: 0 9px 0 5px; border: 1px solid #8c929c; border-right: 0; border-bottom: 0; background: linear-gradient(#f2f2f2, #cdcdcd); }
.doctab.active { height: 24px; background: #fff; border-right: 1px solid #8c929c; }
.doctab .name { flex: 1; min-width: 0; padding-right: 4px; }
.doc { width: 14px; height: 15px; }
.cl svg { width: 10px; height: 10px; }

/* workspace */
.workspace { flex: 1; min-height: 0; display: flex; }
.side { width: 210px; flex: none; display: flex; flex-direction: column; }
.sidetabs { height: 23px; flex: none; position: relative; display: flex; align-items: center; padding-left: 13px; }
.sidetabs svg { position: absolute; inset: 0; }
.sidetabs button { position: relative; margin-right: 16px; }
.sidetabs .cur { font-weight: bold; }
.sidebody { flex: 1; min-height: 0; display: flex; }
.thumbs { flex: 1; overflow: hidden; background: #fff; padding-left: 9px; }
figure { margin: 0; width: 170px; }
figcaption { height: 38px; padding-top: 16px; display: flex; align-items: center; justify-content: space-between; }
figcaption svg { width: 14px; height: 12px; }
.thumb { width: 170px; height: 128px; border: 1px solid #808080; }
.thumb.cut { height: 71px; border-top: 0; }
.sel .thumb { outline: 3px solid #00f; outline-offset: 1px; }
.tt { font-family: "Noto Sans CJK SC", sans-serif; font-weight: 700; }
.tt .n { font-weight: 400; }
.tt .r { fill: #f00; }

.vscroll { width: 16px; flex: 1; min-height: 0; display: flex; flex-direction: column; background: #ededed; }
.vscroll.flat { flex: none; background: #f0f0f0; }
.sb { width: 16px; height: 16px; flex: none; border: 1px solid #a8a8a8; background: linear-gradient(#f6f6f6, #d2d2d2); }
.sb .tri { border-width: 3px; }
.flat .sb { border: 0; background: none; }
.vscroll .knob { flex: 160; border: 1px solid #8e9296; border-radius: 2px; background: linear-gradient(90deg, #f4f4f4, #dadada 50%, #c2c2c6); display: flex; align-items: center; justify-content: center; }
.vscroll .knob i { width: 7px; height: 7px; background: repeating-linear-gradient(#555 0 1px, #f4f4f4 1px 3px); }
.vscroll .a { flex: 177; }
.vscroll .b { flex: 175; }
.flat .a { flex: 187; }
.flat .knob { flex: 149; }
.flat .b { flex: 245; }
.split, .rstrip { flex: none; width: 11px; display: flex; align-items: center; background: #e3eefb; }
.rstrip { width: 7px; justify-content: flex-end; }
.handle { width: 6px; height: 40px; border: 1px solid #888; border-radius: 3px; background: #fff; font-size: 9px; line-height: 36px; text-align: center; color: #555; }

.editor { flex: 1; min-width: 0; display: grid; grid-template-columns: 22px 1fr 17px; grid-template-rows: 24px 1fr 17px; }
.corner { padding: 2px 0; }
.corner svg { width: 20px; height: 20px; }
.hruler { position: relative; margin-top: 3px; border-top: 1px solid #000; border-bottom: 1px solid #000; background: linear-gradient(#fff 15px, #dfeafa 15px); display: flex; padding-left: 12px; font-size: 10px; line-height: 15px; text-align: center; }
.hruler span { flex: 1; background: linear-gradient(#000, #000) 0 5px / 1px 5px no-repeat; }
.hruler .mark { position: absolute; left: 140px; top: 2px; width: 1px; height: 12px; background: #000; }
.vruler { position: relative; margin: 0 0 0 1px; border-left: 1px solid #000; border-right: 1px solid #000; background: linear-gradient(90deg, #fff 16px, #dfeafa 16px); display: flex; flex-direction: column; padding: 7px 3px 0 0; font-size: 10px; line-height: 16px; }
.vruler span { flex: 2; display: flex; align-items: center; justify-content: center; padding-top: 4px; background: linear-gradient(#000, #000) 50% 0 / 6px 1px no-repeat; }
.vruler .half { flex: 1; padding: 0; }
.vruler .mark { position: absolute; left: 2px; top: 112px; width: 12px; height: 1px; background: #000; }
.vcol { grid-column: 3; grid-row: 1 / 4; display: flex; flex-direction: column; }
.nav { width: 17px; height: 18px; flex: none; border-bottom: 1px solid #9aa0a8; border-right: 1px solid #9aa0a8; background: #eef4fc; }
.nav svg { width: 12px; height: 10px; }
.hscroll { grid-column: 1 / 3; grid-row: 3; display: flex; background: #ededed; border-bottom: 1px solid #fff; }
.hscroll .a { flex: 264; }
.hscroll .b { flex: 267; }
.hscroll .knob { flex: 263; border: 1px solid #8e9296; border-radius: 2px; background: linear-gradient(#f4f4f4, #dadada 50%, #c2c2c6); display: flex; align-items: center; justify-content: center; }
.hscroll .knob i { width: 8px; height: 7px; background: repeating-linear-gradient(90deg, #555 0 1px, #f4f4f4 1px 3px); }

.slide { grid-column: 2; grid-row: 2; position: relative; min-height: 0; overflow: hidden; display: flex; flex-direction: column; background: #ecdcb8; }
.bg { position: absolute; inset: 0; width: 100%; height: 100%; }
.canvas { position: relative; margin-top: 7px; height: 509px; flex: none; border: 1px dashed #d2d2d2; border-left: 0; font-family: "Noto Sans CJK SC", sans-serif; }
.canvas h2 { margin: 6px 6px 0 0; font-size: 40px; line-height: 40px; font-weight: 300; color: #f00; text-align: center; }
.canvas h2 b { font-family: "Liberation Serif", serif; }
.canvas h2 em { font-style: normal; -webkit-text-stroke: 1px #f00; }
.text { padding: 4px 0 0 5px; font-size: 27px; line-height: 32px; font-weight: 700; white-space: nowrap; }
.text p { margin: 0; }
.text small { font-size: 20px; line-height: 20px; }
.text .d { font: bold 24px/24px "Liberation Sans", sans-serif; }
.text .first { padding-left: 56px; }
.text .in { text-indent: 2em; }
.footerbox { position: relative; height: 41px; flex: none; margin: 0 90px 0 38px; border: 1px dashed #d2d2d2; }

/* status bar */
.status { height: 27px; flex: none; display: flex; align-items: center; padding-left: 5px; background: linear-gradient(#fff 1px, #edf4fd 2px, #e0ebf9); }
.cell { height: 18px; border: 1px solid #a8acb4; border-right-color: #fff; border-bottom-color: #fff; padding-left: 3px; overflow: hidden; white-space: nowrap; line-height: 16px; margin-right: 7px; flex: none; }
.cell.msg { flex: 1; }
.page { width: 101px; }
.nm { width: 146px; }
.ins { width: 41px; text-align: center; padding: 0; }
.zoomer { display: flex; align-items: center; margin-left: 3px; }
.zoomer button { width: 15px; height: 15px; border: 1px solid #8fa8bc; border-radius: 50%; background: radial-gradient(#fff 30%, #b4d4ec); color: #a01020; font-weight: bold; }
.zoomer input { width: 108px; margin: 0 2px; height: 15px; appearance: none; background: linear-gradient(#555, #555) center / 100% 1px no-repeat; }
.zoomer input::-webkit-slider-thumb { appearance: none; width: 8px; height: 8px; border-radius: 50%; background: #fbbd3c; border: 1px solid #d99a28; }
.pct { width: 59px; padding-left: 17px; }
```
